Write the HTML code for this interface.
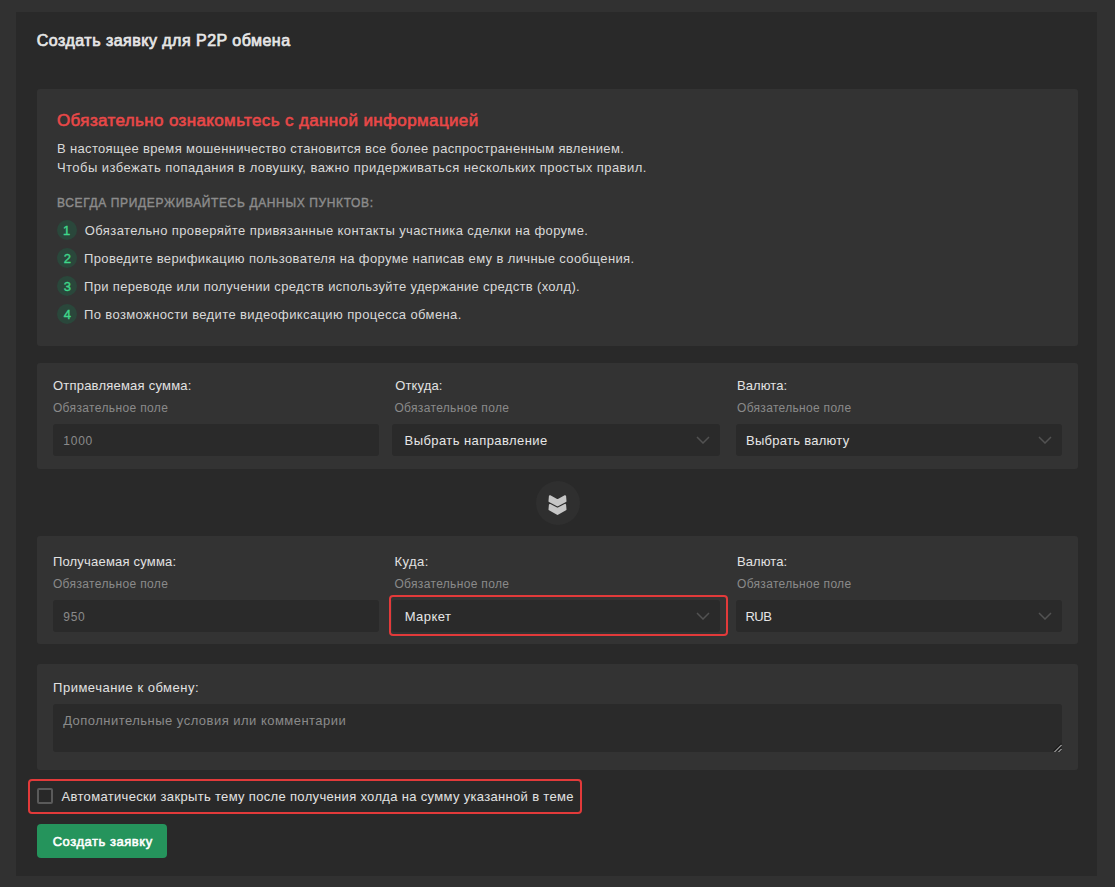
<!DOCTYPE html>
<html><head><meta charset="utf-8">
<style>
*{box-sizing:border-box;margin:0;padding:0}
html,body{width:1115px;height:887px;overflow:hidden;background:#313131;font-family:"Liberation Sans",sans-serif}
.a{position:absolute}
.t{position:absolute;white-space:nowrap;line-height:1}
</style></head><body>
<div class="a" style="left:16px;top:12px;width:1081px;height:864px;background:#292929"></div>
<div class="a" style="left:37px;top:89px;width:1041px;height:257px;background:#333333;border-radius:3px"></div>
<div class="a" style="left:57px;top:220px;width:20px;height:20px;border-radius:50%;background:#2a473b"></div>
<div class="a" style="left:57px;top:248px;width:20px;height:20px;border-radius:50%;background:#2a473b"></div>
<div class="a" style="left:57px;top:276px;width:20px;height:20px;border-radius:50%;background:#2a473b"></div>
<div class="a" style="left:57px;top:304px;width:20px;height:20px;border-radius:50%;background:#2a473b"></div>
<div class="a" style="left:37px;top:363px;width:1041px;height:106px;background:#333333;border-radius:3px"></div>
<div class="a" style="left:53px;top:424px;width:326px;height:32px;background:#2a2a2a;border-radius:3px"></div>
<div class="a" style="left:392px;top:424px;width:328px;height:32px;background:#2a2a2a;border-radius:3px"></div>
<div class="a" style="left:736px;top:424px;width:326px;height:32px;background:#2a2a2a;border-radius:3px"></div>
<svg class="a" style="left:696px;top:436px;width:14px;height:8px" viewBox="0 0 14 8"><path d="M1 1 L7 7 L13 1" fill="none" stroke="#525252" stroke-width="1.5"/></svg>
<svg class="a" style="left:1038px;top:436px;width:14px;height:8px" viewBox="0 0 14 8"><path d="M1 1 L7 7 L13 1" fill="none" stroke="#525252" stroke-width="1.5"/></svg>
<div class="a" style="left:536px;top:481px;width:44px;height:44px;border-radius:50%;background:#2f2f2f"></div>
<svg class="a" style="left:540px;top:488px;width:36px;height:32px" viewBox="540 488 36 32"><path d="M549.9,496.2 L557.5,500.3 L565.1,496.2 L565.5,501.2 L557.5,505.3 L549.5,501.2 Z M549.9,504.9 L557.5,508.8 L565.1,504.9 L565.5,509.4 L557.5,514 L549.5,509.4 Z" fill="#c6c6c6" stroke="#c6c6c6" stroke-width="2" stroke-linejoin="round"/></svg>
<div class="a" style="left:37px;top:536px;width:1041px;height:108px;background:#333333;border-radius:3px"></div>
<div class="a" style="left:53px;top:600px;width:326px;height:32px;background:#2a2a2a;border-radius:3px"></div>
<div class="a" style="left:392px;top:600px;width:328px;height:32px;background:#2a2a2a;border-radius:3px"></div>
<div class="a" style="left:736px;top:600px;width:326px;height:32px;background:#2a2a2a;border-radius:3px"></div>
<svg class="a" style="left:696px;top:612px;width:14px;height:8px" viewBox="0 0 14 8"><path d="M1 1 L7 7 L13 1" fill="none" stroke="#525252" stroke-width="1.5"/></svg>
<svg class="a" style="left:1038px;top:612px;width:14px;height:8px" viewBox="0 0 14 8"><path d="M1 1 L7 7 L13 1" fill="none" stroke="#525252" stroke-width="1.5"/></svg>
<div class="a" style="left:37px;top:664px;width:1041px;height:106px;background:#333333;border-radius:3px"></div>
<div class="a" style="left:53px;top:704px;width:1009px;height:48px;background:#2a2a2a;border-radius:3px"></div>
<svg class="a" style="left:1050px;top:740px;width:14px;height:14px" viewBox="1050 740 14 14"><path d="M1053.5,751 L1061,743.5 M1057.5,751 L1061,747.5" stroke="#151515" stroke-width="1"/><path d="M1054.5,752 L1061.5,745 M1058.5,752 L1061.5,749" stroke="#cfcfcf" stroke-width="1"/></svg>
<div class="a" style="left:37px;top:788px;width:16px;height:16px;border:2px solid #5a5a5a;border-radius:2px;background:#282828"></div>
<div class="a" style="left:37px;top:824px;width:130px;height:34px;background:#25945c;border-radius:4px"></div>
<div class="t" id="title" style="left:36.8px;top:32.8px;font-size:16px;color:#e6e6e6;letter-spacing:0.482px;-webkit-text-stroke:0.70px #e6e6e6">Создать заявку для P2P обмена</div>
<div class="t" id="red" style="left:57.0px;top:112.35px;font-size:17px;color:#e84848;letter-spacing:0.368px;-webkit-text-stroke:0.60px #e84848">Обязательно ознакомьтесь с данной информацией</div>
<div class="t" id="l1" style="left:57.0px;top:142.05px;font-size:13px;color:#d9d9d9;letter-spacing:0.340px">В настоящее время мошенничество становится все более распространенным явлением.</div>
<div class="t" id="l2" style="left:57.0px;top:161.05px;font-size:13px;color:#d9d9d9;letter-spacing:0.449px">Чтобы избежать попадания в ловушку, важно придерживаться нескольких простых правил.</div>
<div class="t" id="up" style="left:57.0px;top:197.0px;font-size:12px;color:#8c8c8c;letter-spacing:0.633px;-webkit-text-stroke:0.40px #8c8c8c">ВСЕГДА ПРИДЕРЖИВАЙТЕСЬ ДАННЫХ ПУНКТОВ:</div>
<div class="t" id="i1" style="left:84.8px;top:224.05px;font-size:13px;color:#d9d9d9;letter-spacing:0.399px">Обязательно проверяйте привязанные контакты участника сделки на форуме.</div>
<div class="t" id="i2" style="left:84.0px;top:252.05px;font-size:13px;color:#d9d9d9;letter-spacing:0.373px">Проведите верификацию пользователя на форуме написав ему в личные сообщения.</div>
<div class="t" id="i3" style="left:84.0px;top:280.05px;font-size:13px;color:#d9d9d9;letter-spacing:0.330px">При переводе или получении средств используйте удержание средств (холд).</div>
<div class="t" id="i4" style="left:84.0px;top:308.05px;font-size:13px;color:#d9d9d9;letter-spacing:0.380px">По возможности ведите видеофиксацию процесса обмена.</div>
<div class="t" id="lb1" style="left:52.9px;top:379.05px;font-size:13px;color:#e2e2e2;letter-spacing:0.225px">Отправляемая сумма:</div>
<div class="t" id="sb1" style="left:52.9px;top:401.8px;font-size:12px;color:#8a8a8a;letter-spacing:0.365px">Обязательное поле</div>
<div class="t" id="v1" style="left:63.3px;top:435.0px;font-size:12px;color:#8a8a8a;letter-spacing:0.750px">1000</div>
<div class="t" id="lb2" style="left:395.2px;top:379.05px;font-size:13px;color:#e2e2e2;letter-spacing:0.150px">Откуда:</div>
<div class="t" id="sb2" style="left:394.4px;top:401.8px;font-size:12px;color:#8a8a8a;letter-spacing:0.339px">Обязательное поле</div>
<div class="t" id="v2" style="left:404.6px;top:434.05px;font-size:13px;color:#e6e6e6;letter-spacing:0.425px">Выбрать направление</div>
<div class="t" id="lb3" style="left:737.0px;top:379.05px;font-size:13px;color:#e2e2e2;letter-spacing:0.075px">Валюта:</div>
<div class="t" id="sb3" style="left:737.0px;top:401.8px;font-size:12px;color:#8a8a8a;letter-spacing:0.310px">Обязательное поле</div>
<div class="t" id="v3" style="left:746.0px;top:434.05px;font-size:13px;color:#e6e6e6;letter-spacing:0.276px">Выбрать валюту</div>
<div class="t" id="lb4" style="left:52.9px;top:555.05px;font-size:13px;color:#e2e2e2;letter-spacing:0.198px">Получаемая сумма:</div>
<div class="t" id="sb4" style="left:52.9px;top:577.8px;font-size:12px;color:#8a8a8a;letter-spacing:0.365px">Обязательное поле</div>
<div class="t" id="v4" style="left:63.3px;top:611.0px;font-size:12px;color:#8a8a8a;letter-spacing:0.675px">950</div>
<div class="t" id="lb5" style="left:394.4px;top:555.05px;font-size:13px;color:#e2e2e2;letter-spacing:0.450px">Куда:</div>
<div class="t" id="sb5" style="left:394.4px;top:577.8px;font-size:12px;color:#8a8a8a;letter-spacing:0.339px">Обязательное поле</div>
<div class="t" id="v5" style="left:404.7px;top:610.05px;font-size:13px;color:#e6e6e6;letter-spacing:0.450px">Маркет</div>
<div class="t" id="lb6" style="left:737.0px;top:555.05px;font-size:13px;color:#e2e2e2;letter-spacing:0.075px">Валюта:</div>
<div class="t" id="sb6" style="left:737.0px;top:577.8px;font-size:12px;color:#8a8a8a;letter-spacing:0.310px">Обязательное поле</div>
<div class="t" id="v6" style="left:745.4px;top:610.05px;font-size:13px;color:#e6e6e6;letter-spacing:-0.450px">RUB</div>
<div class="t" id="lb7" style="left:53.1px;top:681.45px;font-size:13px;color:#e2e2e2;letter-spacing:0.498px">Примечание к обмену:</div>
<div class="t" id="ph" style="left:63.2px;top:714.25px;font-size:13px;color:#8a8a8a;letter-spacing:0.475px">Дополнительные условия или комментарии</div>
<div class="t" id="chk" style="left:61.5px;top:790.05px;font-size:13px;color:#e2e2e2;letter-spacing:0.327px">Автоматически закрыть тему после получения холда на сумму указанной в теме</div>
<div class="t" id="btn" style="left:52.64px;top:835.35px;font-size:13px;color:#ffffff;letter-spacing:0.542px;-webkit-text-stroke:0.55px #ffffff">Создать заявку</div>
<div class="t" id="n1" style="left:63.0px;top:224.0px;font-size:13px;color:#3fd68a;letter-spacing:0.000px;-webkit-text-stroke:0.40px #3fd68a">1</div>
<div class="t" id="n2" style="left:63.8px;top:252.0px;font-size:13px;color:#3fd68a;letter-spacing:0.000px;-webkit-text-stroke:0.40px #3fd68a">2</div>
<div class="t" id="n3" style="left:63.8px;top:280.0px;font-size:13px;color:#3fd68a;letter-spacing:0.000px;-webkit-text-stroke:0.40px #3fd68a">3</div>
<div class="t" id="n4" style="left:63.8px;top:308.0px;font-size:13px;color:#3fd68a;letter-spacing:0.000px;-webkit-text-stroke:0.40px #3fd68a">4</div>
<div class="a" style="left:389px;top:595px;width:339px;height:41px;border:2px solid #e23a3a;border-radius:4px"></div>
<div class="a" style="left:27.5px;top:779px;width:554.5px;height:35px;border:2px solid #e23a3a;border-radius:4px"></div>
</body></html>
